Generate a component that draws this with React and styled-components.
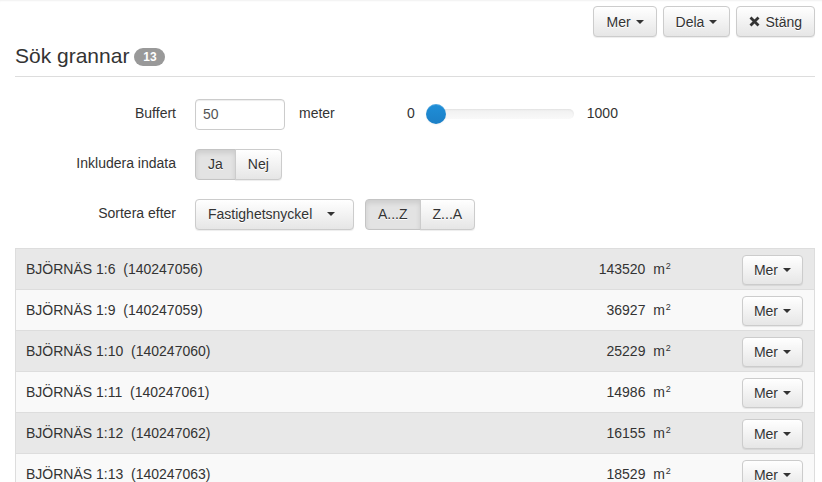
import React from "react";
import styled, { createGlobalStyle, css } from "styled-components";

const GlobalStyle = createGlobalStyle`
  html, body {
    margin: 0;
    padding: 0;
    background: #fff;
  }
  body {
    font-family: "Liberation Sans", Arial, sans-serif;
    font-size: 14px;
    line-height: 1.42857;
    color: #333;
  }
  * { box-sizing: border-box; }
`;

const Page = styled.div`
  width: 822px;
  height: 482px;
  overflow: hidden;
  padding: 6px 7px 0 15px;
  box-shadow: inset 0 2px 2px -1px rgba(0, 0, 0, 0.06);
`;

const Toolbar = styled.div`
  display: flex;
  justify-content: flex-end;
  gap: 6px;
`;

const Btn = styled.button`
  display: inline-flex;
  align-items: center;
  justify-content: center;
  gap: 5px;
  font-family: inherit;
  font-size: 14px;
  line-height: 20px;
  color: #333;
  height: ${p => (p.$small ? 30 : 31)}px;
  padding: 0 ${p => (p.$pad ? p.$pad : 12)}px;
  border: 1px solid #ccc;
  border-radius: 4px;
  background-image: linear-gradient(to bottom, #fff 0, #e6e6e6 100%);
  box-shadow: inset 0 1px 0 rgba(255, 255, 255, 0.15), 0 1px 1px rgba(0, 0, 0, 0.075);
  text-shadow: 0 1px 0 #fff;
  cursor: pointer;
  ${p =>
    p.$active &&
    css`
      background-image: none;
      background-color: #e3e3e3;
      border-color: #c4c4c4;
      box-shadow: inset 0 3px 5px rgba(0, 0, 0, 0.1);
    `}
`;

const Caret = styled.span`
  display: inline-block;
  width: 0;
  height: 0;
  border-top: 4px solid #333;
  border-left: 4px solid transparent;
  border-right: 4px solid transparent;
`;

const Header = styled.div`
  display: flex;
  align-items: center;
  gap: 5px;
  margin-top: 6px;
  padding-bottom: 7px;
  border-bottom: 1px solid #ddd;
`;

const Title = styled.h3`
  margin: 0;
  font-size: 21px;
  font-weight: 400;
  line-height: 26px;
  color: #333;
`;

const Badge = styled.span`
  display: inline-block;
  min-width: 31px;
  height: 18px;
  padding: 0 7px;
  border-radius: 10px;
  background: #999;
  color: #fff;
  font-size: 12px;
  font-weight: 700;
  line-height: 18px;
  text-align: center;
  margin-top: 2px;
`;

const Form = styled.div`
  display: flex;
  flex-direction: column;
  gap: 18px;
  padding: 21px 0 18px;
`;

const FormRow = styled.div`
  display: flex;
  align-items: center;
  height: 32px;
`;

const Label = styled.label`
  width: 161px;
  text-align: right;
  margin-right: 19px;
  color: #333;
`;

const Input = styled.input`
  width: 90px;
  height: 31px;
  padding: 6px 7px;
  font-family: inherit;
  font-size: 14px;
  color: #555;
  border: 1px solid #ccc;
  border-radius: 4px;
  box-shadow: inset 0 1px 1px rgba(0, 0, 0, 0.075);
  outline: none;
`;

const Unit = styled.span`
  margin-left: 14px;
  width: 108px;
`;

const SliderWrap = styled.div`
  display: flex;
  align-items: center;
  gap: 11px;
`;

const Track = styled.div`
  position: relative;
  width: 148px;
  height: 10px;
  border-radius: 5px;
  background: linear-gradient(to bottom, #f0f0f0, #f9f9f9);
  box-shadow: inset 0 1px 2px rgba(0, 0, 0, 0.06);
  margin-right: 2px;
`;

const Thumb = styled.div`
  position: absolute;
  top: -5px;
  left: 0;
  width: 20px;
  height: 20px;
  border-radius: 50%;
  background: linear-gradient(to bottom, #1f8fd8, #1c7fc6);
  box-shadow: inset 0 1px 0 rgba(255, 255, 255, 0.2), 0 1px 2px rgba(0, 0, 0, 0.05);
`;

const Group = styled.div`
  display: inline-flex;
  ${Btn} {
    border-radius: 0;
  }
  ${Btn}:first-child {
    border-radius: 4px 0 0 4px;
  }
  ${Btn}:last-child {
    border-radius: 0 4px 4px 0;
    margin-left: -1px;
  }
`;

const Select = styled(Btn)`
  width: 159px;
  justify-content: space-between;
  padding: 0 18px 0 12px;
  margin-right: 11px;
`;

const List = styled.div`
  border: 1px solid #ddd;
  border-bottom: none;
`;

const Item = styled.div`
  display: flex;
  align-items: center;
  height: 41px;
  padding: 1px 11px 0 10px;
  border-bottom: 1px solid #ddd;
  background: ${p => (p.$odd ? "#e8e8e8" : "#f9f9f9")};
`;

const Name = styled.span`
  flex: 1;
  white-space: pre;
`;

const Area = styled.span`
  margin-right: 71px;
  white-space: pre;
  sup {
    font-size: 9px;
    line-height: 0;
    vertical-align: baseline;
    position: relative;
    top: -5px;
    margin-left: 1px;
  }
`;

const XIcon = () => (
  <svg width="11" height="11" viewBox="0 0 11 11" aria-hidden="true">
    <path d="M1.5 1.5 L9.5 9.5 M9.5 1.5 L1.5 9.5" stroke="#333" strokeWidth="2.8" strokeLinecap="butt" />
  </svg>
);

const rows = [
  ["BJÖRNÄS 1:6", "140247056", "143520"],
  ["BJÖRNÄS 1:9", "140247059", "36927"],
  ["BJÖRNÄS 1:10", "140247060", "25229"],
  ["BJÖRNÄS 1:11", "140247061", "14986"],
  ["BJÖRNÄS 1:12", "140247062", "16155"],
  ["BJÖRNÄS 1:13", "140247063", "18529"],
];

export default function App() {
  return (
    <>
      <GlobalStyle />
      <Page>
        <Toolbar>
          <Btn>
            Mer <Caret />
          </Btn>
          <Btn>
            Dela <Caret />
          </Btn>
          <Btn>
            <XIcon /> Stäng
          </Btn>
        </Toolbar>

        <Header>
          <Title>Sök grannar</Title>
          <Badge>13</Badge>
        </Header>

        <Form>
          <FormRow>
            <Label>Buffert</Label>
            <Input defaultValue="50" />
            <Unit>meter</Unit>
            <SliderWrap>
              <span>0</span>
              <Track>
                <Thumb />
              </Track>
              <span>1000</span>
            </SliderWrap>
          </FormRow>
          <FormRow>
            <Label>Inkludera indata</Label>
            <Group>
              <Btn $active $pad={12}>Ja</Btn>
              <Btn $pad={12}>Nej</Btn>
            </Group>
          </FormRow>
          <FormRow>
            <Label>Sortera efter</Label>
            <Select>
              Fastighetsnyckel <Caret />
            </Select>
            <Group>
              <Btn $active $pad={12}>A...Z</Btn>
              <Btn $pad={12}>Z...A</Btn>
            </Group>
          </FormRow>
        </Form>

        <List>
          {rows.map(([name, id, area], i) => (
            <Item key={id} $odd={i % 2 === 0}>
              <Name>{`${name}  (${id})`}</Name>
              <Area>
                {`${area}  m`}
                <sup>2</sup>
              </Area>
              <Btn $small $pad={11}>
                Mer <Caret />
              </Btn>
            </Item>
          ))}
        </List>
      </Page>
    </>
  );
}
